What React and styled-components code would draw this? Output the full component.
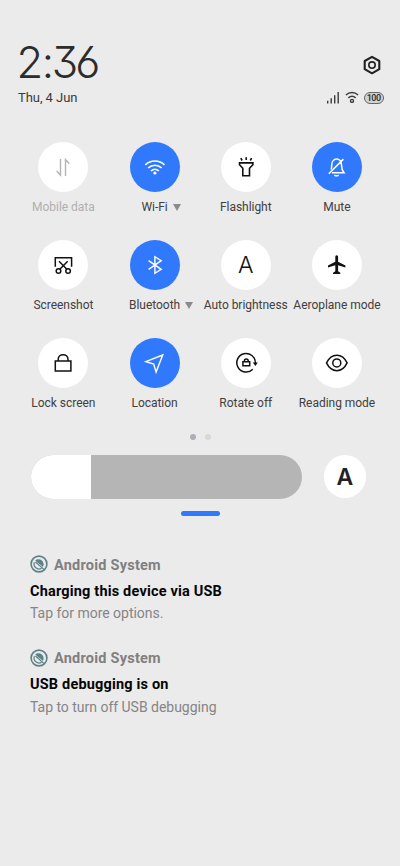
import React from 'react';
import styled, { createGlobalStyle } from 'styled-components';

const GlobalStyle = createGlobalStyle`
  *, *::before, *::after { box-sizing: border-box; }
  body { margin: 0; background: #ebebeb; }
`;

const Screen = styled.main`
  width: 400px;
  height: 866px;
  overflow: hidden;
  background: #ebebeb;
  font-family: Roboto, 'Liberation Sans', sans-serif;
  display: flex;
  flex-direction: column;
`;

const Header = styled.header`
  display: flex;
  justify-content: space-between;
  height: 142px;
  padding: 34px 16px 0 18px;
`;

const HeaderLeft = styled.div`
  display: flex;
  flex-direction: column;
`;

const Clock = styled.div`
  height: 56px;
  margin-left: -1.5px;
  font: 270 43.5px/56px Inter, sans-serif;
  font-feature-settings: 'cv03', 'cv09', 'ss01';
  letter-spacing: -3px;
  color: #2c2c2c;
  white-space: nowrap;
`;

const Colon = styled.span`
  margin: 0 0.8px 0 1.5px;
`;

const DateText = styled.div`
  font-size: 13px;
  line-height: 16px;
  letter-spacing: -0.05px;
  color: #3a3a3a;
  white-space: nowrap;
`;

const HeaderRight = styled.div`
  display: flex;
  flex-direction: column;
  align-items: flex-end;
  gap: 16px;
  padding-top: 21px;
`;

const SettingsIcon = styled.svg`
  width: 20px;
  height: 20px;
  margin-right: 2px;
`;

const StatusBar = styled.div`
  display: flex;
  align-items: center;
  height: 13px;
  gap: 5px;
`;

const StatusIcon = styled.svg`
  width: 14px;
  height: 13px;
`;

const Battery = styled.div`
  width: 20.5px;
  height: 12px;
  border: 1px solid #666;
  border-radius: 6px;
  background: #d2d2d2;
  color: #333;
  font-size: 9px;
  font-weight: 600;
  line-height: 10px;
  letter-spacing: -0.4px;
  text-align: center;
`;

const Tiles = styled.section`
  display: grid;
  grid-template-columns: repeat(4, 91.2px);
  grid-auto-rows: 98px;
  padding-left: 17.8px;
  height: 291px;
`;

const Tile = styled.div`
  display: flex;
  flex-direction: column;
  align-items: center;
  gap: 7px;
`;

const TileButton = styled.div`
  width: 50px;
  height: 50px;
  border-radius: 50%;
  display: flex;
  align-items: center;
  justify-content: center;
  background: ${(p) => (p.$on ? '#3079fd' : '#fff')};
  color: ${(p) => (p.$on ? '#fff' : p.$dim ? '#b3b3b3' : '#111')};
`;

const Glyph = styled.svg`
  width: 50px;
  height: 50px;
  fill: none;
  stroke: currentColor;
  stroke-width: ${(p) => p.$w || 1.4};
`;

const LetterGlyph = styled.span`
  font: ${(p) => (p.$bold ? 600 : 300)} 23px/24px Inter, sans-serif;
  color: ${(p) => (p.$bold ? '#222' : '#111')};
`;

const TileLabel = styled.div`
  position: relative;
  font-size: 12px;
  line-height: 17px;
  letter-spacing: -0.03px;
  white-space: nowrap;
  color: ${(p) => (p.$dim ? '#b0b0b0' : '#404040')};
`;

const Caret = styled.span`
  position: absolute;
  left: calc(100% + 5px);
  top: 5px;
  border: 4.5px solid transparent;
  border-top: 7px solid #8b8b8b;
  border-bottom: 0;
`;

const Pager = styled.div`
  display: flex;
  justify-content: center;
  align-items: center;
  gap: 9px;
  height: 22px;
  margin-top: -7px;
`;

const Dot = styled.span`
  width: 6px;
  height: 6px;
  border-radius: 50%;
  background: ${(p) => (p.$active ? '#aeaeb8' : '#d8d8d8')};
`;

const BrightnessRow = styled.div`
  display: flex;
  align-items: center;
  gap: 21.5px;
  padding-left: 31px;
  margin-top: 7px;
  height: 43.5px;
`;

const Slider = styled.div`
  width: 271px;
  height: 43.5px;
  border-radius: 22px;
  overflow: hidden;
  background: #b5b5b5;
`;

const SliderFill = styled.div`
  width: 60px;
  height: 100%;
  background: #fff;
`;

const AutoButton = styled.div`
  width: 42.5px;
  height: 43px;
  border-radius: 50%;
  background: #fff;
  display: flex;
  align-items: center;
  justify-content: center;
`;

const Handle = styled.div`
  width: 39px;
  height: 5px;
  border-radius: 3px;
  background: #3079fd;
  margin: 12.5px 0 0 180.5px;
`;

const Notifications = styled.section`
  display: flex;
  flex-direction: column;
  padding: 39px 30px 0;
`;

const Notification = styled.article`
  display: flex;
  flex-direction: column;
  height: 93.9px;
  white-space: nowrap;
`;

const AppLine = styled.div`
  display: flex;
  align-items: center;
  height: 20px;
  gap: 6px;
  font-size: 14.5px;
  font-weight: 700;
  letter-spacing: 0.23px;
  color: #808080;
`;

const AppIcon = styled.svg`
  width: 18px;
  height: 18px;
  margin: -2px 0 0 0;
`;

const Title = styled.div`
  margin-top: 6.5px;
  font-size: 14.5px;
  line-height: 20px;
  font-weight: 700;
  letter-spacing: 0.18px;
  color: #050505;
`;

const Body = styled.div`
  margin-top: 2.5px;
  font-size: 14px;
  line-height: 19px;
  letter-spacing: -0.02px;
  color: #858585;
`;

const icons = {
  data: (
    <Glyph viewBox="0 0 50 50" $w={1.4}>
      <path d="M22.5 17v16.2l-3.8-4.2M27.5 34V17.6l3.8 4.2" />
    </Glyph>
  ),
  wifi: (
    <Glyph viewBox="0 0 50 50" $w={1.6}>
      <path d="M15.3 22.8c5.4-5 13.8-5 19.2 0M18.1 26c3.9-3.7 9.7-3.7 13.6 0M21 29c2.3-2.2 5.5-2.2 7.8 0" />
      <circle cx="24.9" cy="31" r="1.6" fill="currentColor" stroke="none" />
    </Glyph>
  ),
  flashlight: (
    <Glyph viewBox="0 0 50 50" $w={1.6}>
      <path d="M25.2 15.3v2.8M19.8 16.2l1.3 2.3M30.6 16.2l-1.3 2.3M18.5 20.9h13.4v1.8l-3.4 3.6v7.4h-6.7v-7.4l-3.3-3.6z" />
    </Glyph>
  ),
  mute: (
    <Glyph viewBox="0 0 50 50" $w={1.5}>
      <path d="M19.1 27.5c.5-1 .6-2.2.6-4.3 0-7.9 9.8-8.3 9.8-.2 0 4.4.7 5.6 2.5 7.8H20M16.8 31.8L31.4 17.1M22.4 33.1c1.3.9 2.9.9 4.2 0" />
    </Glyph>
  ),
  screenshot: (
    <Glyph viewBox="0 0 50 50" $w={1.5}>
      <path d="M17.3 26.7v-9h16.3v9M21 21.3l7.9 8M29.7 21.3l-7.9 8" />
      <circle cx="20.5" cy="31" r="2.3" />
      <circle cx="30.1" cy="31" r="2.3" />
    </Glyph>
  ),
  bluetooth: (
    <Glyph viewBox="0 0 50 50" $w={1.4}>
      <path d="M18.6 20.7l12.6 8.6-6.3 4V16.7l6.3 4-12.6 8.6" />
    </Glyph>
  ),
  letter: <LetterGlyph>A</LetterGlyph>,
  plane: (
    <Glyph viewBox="0 0 50 50">
      <path
        fill="currentColor"
        stroke="none"
        d="M24.7 15.2c-1 0-1.4.8-1.4 1.8v4.7L16 25.6v1.9l7.3-2.2v5.9l-2.2 1.5v1.4h7.2v-1.4l-2.2-1.5v-5.9l7.3 2.2v-1.9l-7.3-3.9V17c0-1-.4-1.8-1.4-1.8z"
      />
    </Glyph>
  ),
  lock: (
    <Glyph viewBox="0 0 50 50" $w={1.5}>
      <path d="M17.3 23.1h15.6v9.8H17.3zM20.2 23v-1.6c0-6.3 9.8-6.3 9.8 0V23" />
    </Glyph>
  ),
  location: (
    <Glyph viewBox="0 0 50 50" $w={1.4}>
      <path d="M32.7 17L15.8 23.6l7.9 2.5 2.4 8z" />
    </Glyph>
  ),
  rotate: (
    <Glyph viewBox="0 0 50 50" $w={1.5}>
      <path d="M31.8 31.2A9.3 9.3 0 1 1 34.4 25" />
      <path d="M31.8 24.4h5L34.4 28z" fill="currentColor" stroke="none" />
      <path d="M21.9 23.7h6.8v4h-6.8zM23.4 23.5v-.7c0-2.5 3.8-2.5 3.8 0v.7" />
    </Glyph>
  ),
  eye: (
    <Glyph viewBox="0 0 50 50" $w={1.5}>
      <path d="M14.5 24.9c4.9-10.3 15.8-10.3 20.6 0-4.8 10.3-15.7 10.3-20.6 0z" />
      <circle cx="24.8" cy="24.9" r="4" />
    </Glyph>
  ),
};

const tiles = [
  { label: 'Mobile data', icon: 'data', dim: true },
  { label: 'Wi-Fi', icon: 'wifi', on: true, menu: true },
  { label: 'Flashlight', icon: 'flashlight' },
  { label: 'Mute', icon: 'mute', on: true },
  { label: 'Screenshot', icon: 'screenshot' },
  { label: 'Bluetooth', icon: 'bluetooth', on: true, menu: true },
  { label: 'Auto brightness', icon: 'letter' },
  { label: 'Aeroplane mode', icon: 'plane' },
  { label: 'Lock screen', icon: 'lock' },
  { label: 'Location', icon: 'location', on: true },
  { label: 'Rotate off', icon: 'rotate' },
  { label: 'Reading mode', icon: 'eye' },
];

const notifications = [
  { title: 'Charging this device via USB', body: 'Tap for more options.' },
  { title: 'USB debugging is on', body: 'Tap to turn off USB debugging' },
];

export default function App() {
  return (
    <>
      <GlobalStyle />
      <Screen>
        <Header>
          <HeaderLeft>
            <Clock>2<Colon>:</Colon>36</Clock>
            <DateText>Thu, 4 Jun</DateText>
          </HeaderLeft>
          <HeaderRight>
            <SettingsIcon viewBox="0 0 20 20" fill="none" stroke="#222">
              <path d="M10 1.9l7.3 4.1v8.2L10 18.3l-7.3-4.1V6z" strokeWidth="2.1" strokeLinejoin="round" />
              <circle cx="10" cy="10.1" r="3.2" strokeWidth="1.6" />
            </SettingsIcon>
            <StatusBar>
              <StatusIcon viewBox="0 0 14 13" stroke="#3a3a3a" strokeWidth="1.4">
                <path d="M1.7 12.5V9.8M5.2 12.5V7.3M8.7 12.5V4.3M12.2 12.5V1" />
              </StatusIcon>
              <StatusIcon viewBox="0 0 14 13" fill="none" stroke="#3a3a3a" strokeWidth="1.4">
                <path d="M.9 3.9c3.6-3.3 8.6-3.3 12.2 0M3.3 6.9c2.3-2 5.1-2 7.4 0" />
                <circle cx="7" cy="9.9" r="1.5" />
              </StatusIcon>
              <Battery>100</Battery>
            </StatusBar>
          </HeaderRight>
        </Header>
        <Tiles>
          {tiles.map((t) => (
            <Tile key={t.label}>
              <TileButton $on={t.on} $dim={t.dim}>{icons[t.icon]}</TileButton>
              <TileLabel $dim={t.dim}>
                {t.label}
                {t.menu && <Caret />}
              </TileLabel>
            </Tile>
          ))}
        </Tiles>
        <Pager>
          <Dot $active />
          <Dot />
        </Pager>
        <BrightnessRow>
          <Slider><SliderFill /></Slider>
          <AutoButton><LetterGlyph $bold>A</LetterGlyph></AutoButton>
        </BrightnessRow>
        <Handle />
        <Notifications>
          {notifications.map((n) => (
            <Notification key={n.title}>
              <AppLine>
                <AppIcon viewBox="0 0 18 18" fill="none" stroke="#5f8087">
                  <circle cx="9" cy="9" r="7.9" strokeWidth="1.6" />
                  <path d="M11.6 13.3A5 5 0 0 1 4.4 7.2" strokeWidth="1.2" />
                  <path d="M5.2 5.6C7.8 3 13.2 4.2 13.7 9.4L12.9 12 10.4 9.8 8.4 8.2z" fill="#5f8087" stroke="none" />
                  <path d="M5.4 7L14.2 14.6" strokeWidth="1.2" />
                </AppIcon>
                Android System
              </AppLine>
              <Title>{n.title}</Title>
              <Body>{n.body}</Body>
            </Notification>
          ))}
        </Notifications>
      </Screen>
    </>
  );
}
